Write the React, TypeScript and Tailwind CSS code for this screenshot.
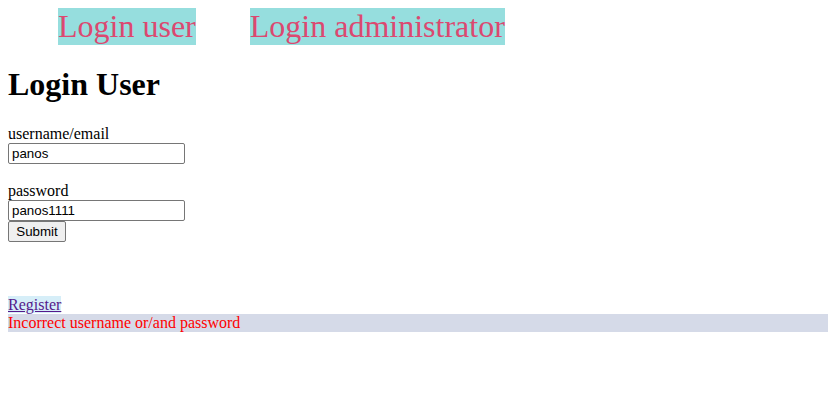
import React from "react";

export default function App() {
  return (
    <div className="p-2 bg-white text-black min-h-[420px]" style={{ fontFamily: '"Liberation Serif", serif' }}>
      <nav className="flex pl-[50px] gap-[54px]">
        <a className="bg-[#96dede] text-[#dc4870] text-[32px] leading-[37px] no-underline" href="#">
          Login user
        </a>
        <a className="bg-[#96dede] text-[#dc4870] text-[32px] leading-[37px] no-underline" href="#">
          Login administrator
        </a>
      </nav>
      <h1 className="text-[32px] font-bold leading-[37px] my-[21.44px]">Login User</h1>
      <form className="text-[16px]">
        <div className="leading-[18px]">username/email</div>
        <input
          className="block w-[177px] h-[21px] border border-[#767676] rounded-[2px] px-[3px] text-[13.33px] text-black"
          style={{ fontFamily: '"Liberation Sans", Arial, sans-serif' }}
          defaultValue="panos"
        />
        <div className="h-[18px]" />
        <div className="leading-[18px]">password</div>
        <input
          className="block w-[177px] h-[21px] border border-[#767676] rounded-[2px] px-[3px] text-[13.33px] text-black"
          style={{ fontFamily: '"Liberation Sans", Arial, sans-serif' }}
          defaultValue="panos1111"
        />
        <button
          type="button"
          className="block w-[58px] h-[21px] bg-[#efefef] border border-[#767676] rounded-[2px] text-[13.33px] text-black leading-none text-center"
          style={{ fontFamily: '"Liberation Sans", Arial, sans-serif' }}
        >
          Submit
        </button>
      </form>
      <div className="mt-[54px] leading-[18px] text-[16px]">
        <a href="#" className="bg-[#d6eef8] text-[#551a8b] underline">
          Register
        </a>
      </div>
      <div className="bg-[#d5dae8] text-[#ff0000] text-[16px] leading-[18px] -mr-2">
        Incorrect username or/and password
      </div>
    </div>
  );
}
